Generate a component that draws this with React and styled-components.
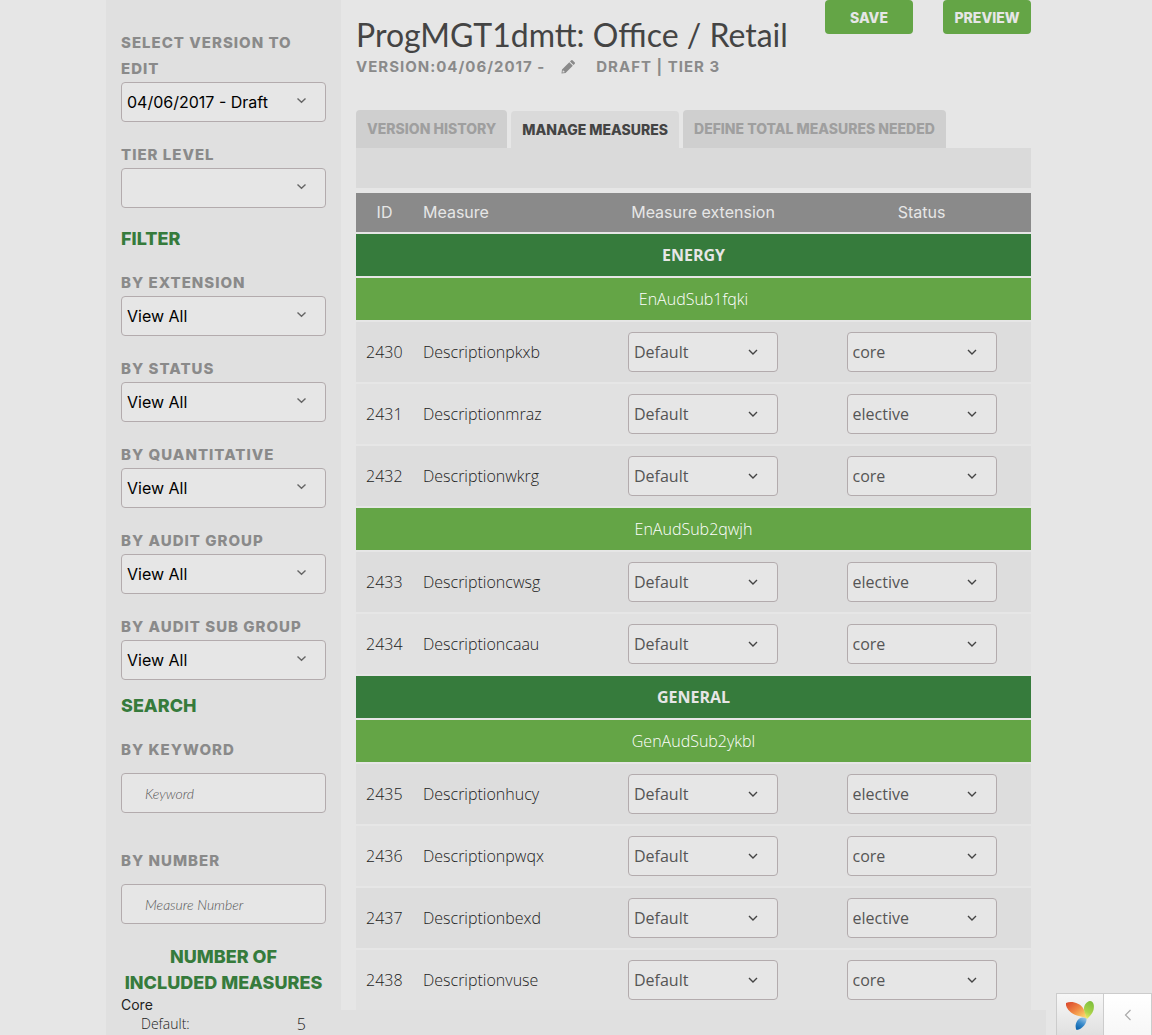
import React from "react";
import styled, { createGlobalStyle } from "styled-components";

const display = '"Inter", "Liberation Sans", sans-serif';
const body = '"Open Sans", "Liberation Sans", sans-serif';
const lato = '"Lato", "Liberation Sans", sans-serif';

const GlobalStyle = createGlobalStyle`
  * { box-sizing: border-box; }
  body {
    margin: 0;
    background: #e6e6e6;
    color: #222;
    font-family: ${body};
    font-size: 16px;
  }
  h1, h2, h3, p, dl, dd { margin: 0; }
`;

const Page = styled.div`
  display: flex;
  align-items: flex-start;
  max-width: 940px;
  min-height: 100vh;
  margin: 0 auto;
  background: #e0e0e0;
`;

const Sidebar = styled.aside`
  width: 25%;
  padding: 30px 15px 0;
`;

const Main = styled.main`
  flex: 1;
  min-width: 0;
  padding: 0 15px;
  background: #e6e6e6;
`;

const Field = styled.div`
  margin-bottom: ${(p) => p.$after}px;
`;

const FieldLabel = styled.label`
  display: block;
  margin-bottom: ${(p) => (p.$spaced ? 10 : 0)}px;
  color: #8a8a8a;
  font: 800 15px/26px ${display};
  letter-spacing: 1px;
  text-transform: uppercase;
`;

const SideHeading = styled.h2`
  margin-bottom: 20px;
  color: #367b3c;
  font: 800 18px/22px ${display};
`;

const TotalsHeading = styled.h2`
  color: #367b3c;
  font: 800 18px/26px ${display};
  text-align: center;
  white-space: nowrap;
`;

const SelectBox = styled.span`
  position: relative;
  display: inline-block;
  vertical-align: top;
  width: ${(p) => (p.$wide ? "100%" : "150px")};

  svg {
    position: absolute;
    top: ${(p) => (p.$wide ? 13 : 15)}px;
    right: 20px;
    pointer-events: none;
  }
`;

const SelectControl = styled.select`
  display: block;
  width: 100%;
  height: 40px;
  padding: 0 5px;
  appearance: none;
  border: 1px solid #b3abad;
  border-radius: 4px;
  background: #e6e6e6;
  color: ${(p) => (p.$wide ? "#000" : "#555")};
  font: ${(p) => (p.$wide ? `400 16px ${display}` : `500 16px ${body}`)};
`;

const TextInput = styled.input`
  display: block;
  width: 100%;
  height: 40px;
  padding: 0 23px;
  border: 1px solid #b3abad;
  border-radius: 4px;
  background: #e6e6e6;
  color: #444;
  font: italic 300 14px ${lato};

  &::placeholder { color: #555; opacity: 1; }
`;

const TotalsGroup = styled.h3`
  color: #222;
  font: 400 14px/18px ${display};
`;

const TotalsRow = styled.dl`
  display: flex;
  justify-content: space-between;
  padding: 0 20px;
  font-weight: 300;
  line-height: 20px;

  dt { font-size: 14px; }
`;

const Header = styled.header`
  display: flex;
  justify-content: space-between;
  align-items: flex-start;
`;

const Title = styled.h1`
  padding-top: 15px;
  color: #444;
  font: 400 32px/40px ${lato};
`;

const Actions = styled.div`
  display: flex;
  gap: 30px;
`;

const ActionButton = styled.button`
  width: 88px;
  height: 34px;
  padding: 0;
  border: 0;
  border-radius: 4px;
  background: #64a546;
  color: #e6e6e6;
  font: 800 14px ${display};
`;

const VersionLine = styled.p`
  display: flex;
  align-items: center;
  color: #8a8a8a;
  font: 700 15px/24px ${display};
  letter-spacing: 1px;
`;

const EditButton = styled.button`
  display: flex;
  margin: 0 20px 0 15px;
  padding: 0;
  border: 0;
  background: none;
  color: #8a8a8a;
`;

const Tabs = styled.nav`
  display: flex;
  align-items: flex-end;
  gap: 4px;
  margin-top: 31px;
`;

const Tab = styled.a`
  height: ${(p) => (p.$active ? 37 : 38)}px;
  padding: 0 11px;
  border-radius: 4px 4px 0 0;
  background: ${(p) => (p.$active ? "#dadada" : "#cfcfcf")};
  color: ${(p) => (p.$active ? "#444" : "#9f9f9f")};
  font: 800 14px/38px ${display};
  text-decoration: none;
  white-space: nowrap;
`;

const TabPanel = styled.div`
  height: 40px;
  margin-bottom: 5px;
  background: #dadada;
`;

const Table = styled.table`
  width: 100%;
  table-layout: fixed;
  border-collapse: separate;
  border-spacing: 0;
`;

const Column = styled.col`
  width: ${(p) => p.$width};
`;

const HeadCell = styled.th`
  height: 39px;
  padding: 0 10px 2px;
  background: #8a8a8a;
  color: #e6e6e6;
  font: 400 16px/20px ${display};
  text-align: ${(p) => p.$align};
`;

const BandCell = styled.th`
  height: 44px;
  padding: 0;
  border-top: 2px solid #e6e6e6;
  background: ${(p) => (p.$group ? "#367b3c" : "#64a546")};
  color: ${(p) => (p.$group ? "#e6e6e6" : "#fff")};
  font: ${(p) => (p.$group ? 700 : 300)} 16px/20px ${body};
  text-align: center;
`;

const Cell = styled.td`
  height: 62px;
  padding: 0 10px;
  border-top: 2px solid #e6e6e6;
  background: ${(p) => (p.$odd ? "#dddddd" : "#e1e1e1")};
  font-weight: 300;
  text-align: ${(p) => p.$align || "left"};
`;

const DebugBar = styled.div`
  position: fixed;
  right: 0;
  bottom: 0;
  display: flex;
  height: 42px;
  border: 1px solid #ccc;
  border-bottom: 0;
  background: #fff;
`;

const DebugLogo = styled.a`
  display: flex;
  width: 47px;
  align-items: center;
  justify-content: center;
  border-right: 1px solid #ccc;
  background: linear-gradient(#f7f7f7, #e0e0e0);
`;

const DebugToggle = styled.button`
  display: flex;
  width: 47px;
  align-items: center;
  justify-content: center;
  padding: 0;
  border: 0;
  background: linear-gradient(#fff, #f7f7f7);
`;

function Select({ wide, options, ...rest }) {
  return (
    <SelectBox $wide={wide}>
      <SelectControl $wide={wide} {...rest}>
        {options.map((o) => (
          <option key={o} value={o}>{o}</option>
        ))}
      </SelectControl>
      <svg width="10" height="10" viewBox="0 0 10 10" fill="none" stroke={wide ? "#666" : "#444"} strokeWidth="1.4">
        <path d={wide ? "M1.500 3.500L5.500 7.300l4-3.800" : "M1 3l4 4 4-4"} />
      </svg>
    </SelectBox>
  );
}

function SelectField({ id, label, options }) {
  return (
    <Field $after={id === "audit-sub-group" ? 15 : 20}>
      <FieldLabel htmlFor={id}>{label}</FieldLabel>
      <Select wide id={id} options={options} />
    </Field>
  );
}

const filters = [
  ["extension", "By extension"],
  ["status", "By status"],
  ["quantitative", "By quantitative"],
  ["audit-group", "By audit group"],
  ["audit-sub-group", "By audit sub group"],
];

const groups = [
  {
    name: "ENERGY",
    subs: [
      { name: "EnAudSub1fqki", rows: [[2430, "Descriptionpkxb", "core"], [2431, "Descriptionmraz", "elective"], [2432, "Descriptionwkrg", "core"]] },
      { name: "EnAudSub2qwjh", rows: [[2433, "Descriptioncwsg", "elective"], [2434, "Descriptioncaau", "core"]] },
    ],
  },
  {
    name: "GENERAL",
    subs: [
      { name: "GenAudSub2ykbl", rows: [[2435, "Descriptionhucy", "elective"], [2436, "Descriptionpwqx", "core"], [2437, "Descriptionbexd", "elective"], [2438, "Descriptionvuse", "core"]] },
    ],
  },
];

function MeasureRow({ row: [id, name, status], odd }) {
  return (
    <tr>
      <Cell $odd={odd}>{id}</Cell>
      <Cell $odd={odd}>{name}</Cell>
      <Cell $odd={odd} $align="center">
        <Select aria-label={`Measure extension ${id}`} options={["Default"]} />
      </Cell>
      <Cell $odd={odd} $align="center">
        <Select aria-label={`Status ${id}`} defaultValue={status} options={["core", "elective"]} />
      </Cell>
    </tr>
  );
}

function YiiLogo() {
  return (
    <svg width="30" height="34" viewBox="0 0 30 34">
      <defs>
        <linearGradient id="flame" x1="0" y1="0" x2="1" y2="1">
          <stop offset="0" stopColor="#d9432b" />
          <stop offset=".5" stopColor="#f08a45" />
          <stop offset="1" stopColor="#ffe774" />
        </linearGradient>
        <linearGradient id="leaf" x1="0.6" y1="0" x2="0.3" y2="1">
          <stop offset="0" stopColor="#7fbf3b" />
          <stop offset=".6" stopColor="#a9d34a" />
          <stop offset="1" stopColor="#f2ee6a" />
        </linearGradient>
        <linearGradient id="drop" x1="0.8" y1="0" x2="0.3" y2="1">
          <stop offset="0" stopColor="#9cc5e6" />
          <stop offset=".5" stopColor="#3a8bcb" />
          <stop offset="1" stopColor="#0b63ac" />
        </linearGradient>
      </defs>
      <path d="M1 5C7 2.500 15 5.500 18 10C20 13 21 17 21.500 20.500C17 18 11 18.500 6 14.500C2 11 .5 8 1 5Z" fill="url(#flame)" />
      <path d="M25 3C29 3.500 29.500 8 28.500 12C27.500 16 24 19 21.500 21.500C21.500 17 19 15 19 10.500C19 7 21.500 3.500 25 3Z" fill="url(#leaf)" />
      <path d="M21.500 20.500C22 25 18 31 11.500 32C9.500 28 11 23 14.500 20.500C17 19 19.500 19.500 21.500 20.500Z" fill="url(#drop)" />
    </svg>
  );
}

export default function App() {
  return (
    <>
      <GlobalStyle />
      <Page>
        <Sidebar>
          <SelectField id="version" label="Select version to edit" options={["04/06/2017 - Draft"]} />
          <SelectField id="tier" label="Tier level" options={[""]} />
          <SideHeading>FILTER</SideHeading>
          {filters.map(([id, label]) => (
            <SelectField key={id} id={id} label={label} options={["View All"]} />
          ))}
          <SideHeading>SEARCH</SideHeading>
          <Field $after={35}>
            <FieldLabel $spaced htmlFor="keyword">By keyword</FieldLabel>
            <TextInput id="keyword" placeholder="Keyword" />
          </Field>
          <Field $after={20}>
            <FieldLabel $spaced htmlFor="number">By number</FieldLabel>
            <TextInput id="number" placeholder="Measure Number" />
          </Field>
          <TotalsHeading>
            NUMBER OF
            <br />
            INCLUDED MEASURES
          </TotalsHeading>
          <TotalsGroup>Core</TotalsGroup>
          <TotalsRow>
            <dt>Default:</dt>
            <dd>5</dd>
          </TotalsRow>
        </Sidebar>
        <Main>
          <Header>
            <Title>ProgMGT1dmtt: Office / Retail</Title>
            <Actions>
              <ActionButton type="button">SAVE</ActionButton>
              <ActionButton type="button">PREVIEW</ActionButton>
            </Actions>
          </Header>
          <VersionLine>
            <span>VERSION:04/06/2017 -</span>
            <EditButton type="button" aria-label="Edit version">
              <svg width="16" height="16" viewBox="0 0 16 16" fill="currentColor">
                <path d="M11.3 1.2q.6-.5 1.200 0l2.300 2.300q.5.6 0 1.200l-1.300 1.300-3.500-3.500zM9.300 3.200l3.500 3.500-7.300 7.300L1.500 14.500 2 10.500zM2.800 11.500l-.3 2 2-.3v-1h-.9v-.8z" fillRule="evenodd" />
              </svg>
            </EditButton>
            <span>DRAFT | TIER 3</span>
          </VersionLine>
          <Tabs>
            <Tab href="#history">VERSION HISTORY</Tab>
            <Tab href="#measures" $active>MANAGE MEASURES</Tab>
            <Tab href="#totals">DEFINE TOTAL MEASURES NEEDED</Tab>
          </Tabs>
          <TabPanel />
          <Table>
            <colgroup>
              <Column $width="57px" />
              <Column $width="auto" />
              <Column $width="218px" />
              <Column $width="219px" />
            </colgroup>
            <thead>
              <tr>
                <HeadCell $align="center">ID</HeadCell>
                <HeadCell $align="left">Measure</HeadCell>
                <HeadCell $align="center">Measure extension</HeadCell>
                <HeadCell $align="center">Status</HeadCell>
              </tr>
            </thead>
            {groups.map((g) => (
              <tbody key={g.name}>
                <tr>
                  <BandCell $group colSpan={4}>{g.name}</BandCell>
                </tr>
                {g.subs.map((s) => (
                  <React.Fragment key={s.name}>
                    <tr>
                      <BandCell colSpan={4}>{s.name}</BandCell>
                    </tr>
                    {s.rows.map((row, i) => (
                      <MeasureRow key={row[0]} row={row} odd={i % 2 === 0} />
                    ))}
                  </React.Fragment>
                ))}
              </tbody>
            ))}
          </Table>
        </Main>
      </Page>
      <DebugBar>
        <DebugLogo href="#debug" aria-label="Debugger">
          <YiiLogo />
        </DebugLogo>
        <DebugToggle type="button" aria-label="Open toolbar">
          <svg width="8" height="12" viewBox="0 0 8 12" fill="none" stroke="#aaa" strokeWidth="1.200">
            <path d="M6.500 1L1.500 6l5 5" />
          </svg>
        </DebugToggle>
      </DebugBar>
    </>
  );
}
